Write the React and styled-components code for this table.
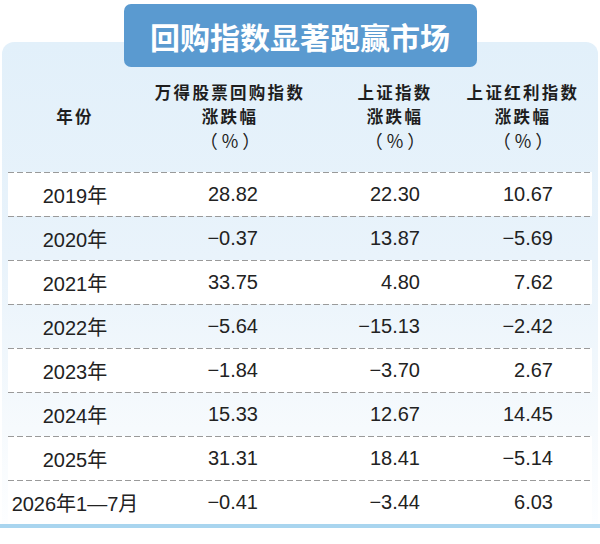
import styled, { createGlobalStyle } from "styled-components"

const GlobalStyle = createGlobalStyle`
    body {
        margin: 0;
        background: #fff;
        font-family: "Liberation Sans", "Noto Sans CJK SC", sans-serif;
    }
`

const Page = styled.div`
    width: 600px;
    height: 544px;
    background: #fff;
    display: flex;
    flex-direction: column;
    align-items: center;
    padding-top: 4px;
    box-sizing: border-box;
`

const Badge = styled.div`
    position: relative;
    z-index: 1;
    width: 353px;
    height: 63px;
    margin-bottom: -25px;
    background: #5a9ad0;
    border-radius: 7px;
    color: #fff;
    font-size: 30px;
    font-weight: bold;
    display: flex;
    align-items: center;
    justify-content: center;
    font-family: "Noto Sans CJK SC", sans-serif;
`

const Panel = styled.div`
    width: 596px;
    background: linear-gradient(to bottom, #e2f0fa 0%, #e9f3fb 45%, #f6fafd 80%, #fdfeff 100%);
    border-radius: 12px 12px 0 0;
    padding: 0 6px;
    box-sizing: border-box;
`

const Head = styled.div`
    display: grid;
    grid-template-columns: 134px 176px 154px 120px;
    align-items: center;
    padding: 38px 0 20px;
    height: 130px;
    box-sizing: border-box;
    color: #1e1e1e;
    font-size: 16.5px;
    letter-spacing: 2.3px;
    line-height: 24px;
    font-family: "Noto Sans CJK SC", sans-serif;
    font-weight: 700;
`

const HeadCell = styled.div`
    display: flex;
    flex-direction: column;
    align-items: center;
    white-space: nowrap;
    padding-right: ${p => p.$shift || 0}px;
`

const Pct = styled.span`
    font-weight: 400;
    font-size: 18px;
    letter-spacing: 0;
`

const Row = styled.div`
    display: grid;
    grid-template-columns: 134px 176px 154px 120px;
    align-items: center;
    height: 44px;
    background-image: repeating-linear-gradient(to right, #9a9a9a 0 6px, transparent 6px 9px);
    background-size: 100% 1px;
    background-repeat: no-repeat;
    background-color: ${p => (p.$light ? "#fff" : "transparent")};
    font-size: 20px;
    color: #222;
    font-family: "Liberation Sans", "Noto Sans CJK SC", sans-serif;
`

const YearCell = styled.div`
    text-align: center;
    white-space: nowrap;
`

const NumCell = styled.div`
    text-align: right;
    padding-right: ${p => p.$pad}px;
`

const BottomLine = styled.div`
    width: 600px;
    height: 4px;
    background: #a9d5ef;
`

const data = [
    ["2019年", "28.82", "22.30", "10.67"],
    ["2020年", "−0.37", "13.87", "−5.69"],
    ["2021年", "33.75", "4.80", "7.62"],
    ["2022年", "−5.64", "−15.13", "−2.42"],
    ["2023年", "−1.84", "−3.70", "2.67"],
    ["2024年", "15.33", "12.67", "14.45"],
    ["2025年", "31.31", "18.41", "−5.14"],
    ["2026年1—7月", "−0.41", "−3.44", "6.03"],
]

export default function App() {
    return (
        <Page>
            <GlobalStyle />
            <Badge>回购指数显著跑赢市场</Badge>
            <Panel>
                <Head>
                    <HeadCell>年份</HeadCell>
                    <HeadCell>
                        <span>万得股票回购指数</span>
                        <span>涨跌幅</span>
                        <Pct>（ % ）</Pct>
                    </HeadCell>
                    <HeadCell>
                        <span>上证指数</span>
                        <span>涨跌幅</span>
                        <Pct>（ % ）</Pct>
                    </HeadCell>
                    <HeadCell $shift={18}>
                        <span>上证红利指数</span>
                        <span>涨跌幅</span>
                        <Pct>（ % ）</Pct>
                    </HeadCell>
                </Head>
                {data.map((r, i) => (
                    <Row key={r[0]} $light={i % 2 === 0 || i === 7}>
                        <YearCell>{r[0]}</YearCell>
                        <NumCell $pad={60}>{r[1]}</NumCell>
                        <NumCell $pad={52}>{r[2]}</NumCell>
                        <NumCell $pad={39}>{r[3]}</NumCell>
                    </Row>
                ))}
            </Panel>
            <BottomLine />
        </Page>
    )
}
